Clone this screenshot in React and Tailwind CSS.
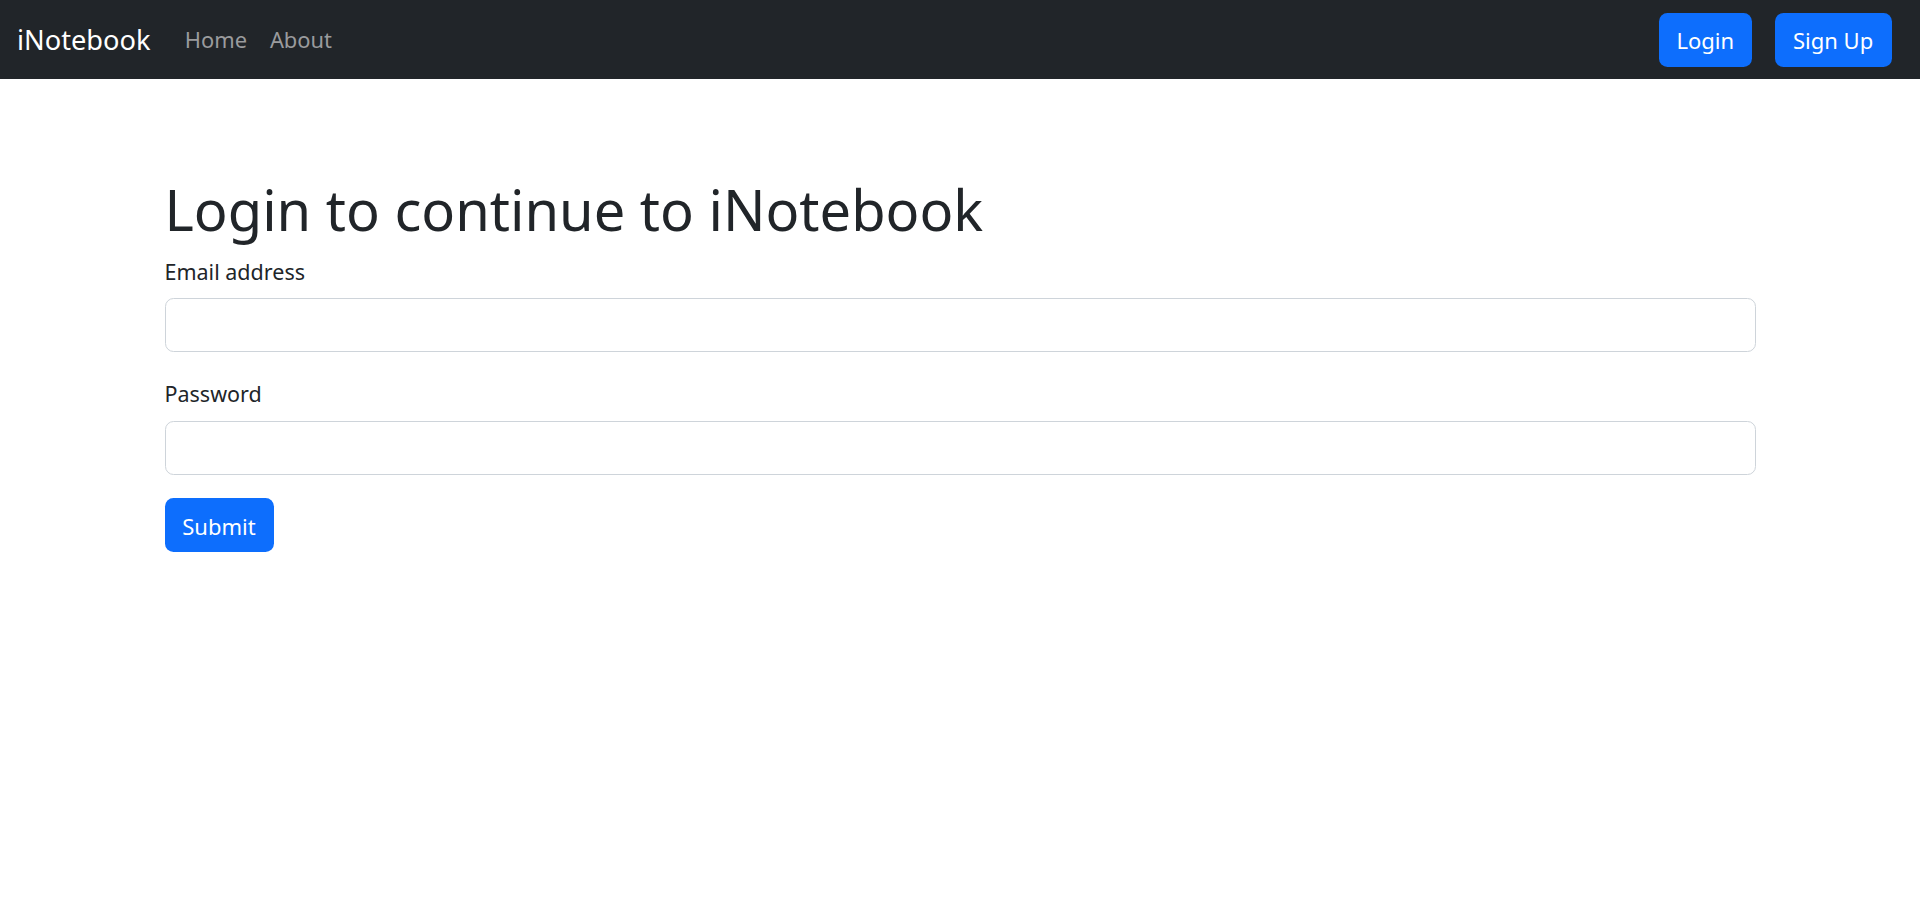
export default function App() {
  return (
    <div className="min-h-screen bg-white text-[#212529]" style={{ fontFamily: '"Noto Sans", "Open Sans", sans-serif' }}>
      <nav className="h-[79px] bg-[#212529] flex items-center px-[17px]">
        <a href="#" className="text-white text-[27.2px] mr-[23px] leading-[1.5] pt-[2px]">iNotebook</a>
        <ul className="flex items-center pt-[2px]">
          <li><a href="#" className="px-[11.4px] text-[21.9px] text-[#9a9b9d]">Home</a></li>
          <li><a href="#" className="px-[11.4px] text-[21.9px] text-[#9a9b9d]">About</a></li>
        </ul>
        <div className="ml-auto flex items-center">
          <button className="h-[54px] w-[93px] mx-[11.4px] pt-[2px] rounded-[8.5px] bg-[#0d6efd] text-white text-[22px]">Login</button>
          <button className="h-[54px] w-[117px] mx-[11.4px] pt-[2px] rounded-[8.5px] bg-[#0d6efd] text-white text-[22px]">Sign Up</button>
        </div>
      </nav>

      <div className="w-[1625px] mx-auto px-[17px] pt-[96px]">
        <h1 className="text-[56px] leading-[68.4px] font-normal mb-[9.4px]">Login to continue to iNotebook</h1>
        <form>
          <div className="mb-[22.8px]">
            <label className="block text-[21.5px] leading-[34.2px] pt-[2px] mb-[9.4px]">Email address</label>
            <input type="email" className="block w-full h-[54px] border border-[#ced4da] rounded-[8.5px] px-[17px] text-[22.8px] outline-none" />
          </div>
          <div className="mb-[22.8px]">
            <label className="block text-[21.5px] leading-[34.2px] pt-[2px] mb-[9.4px]">Password</label>
            <input type="password" className="block w-full h-[54px] border border-[#ced4da] rounded-[8.5px] px-[17px] text-[22.8px] outline-none" />
          </div>
          <button type="submit" className="h-[54px] w-[109px] pt-[3px] rounded-[8.5px] bg-[#0d6efd] text-white text-[22px]">Submit</button>
        </form>
      </div>
    </div>
  );
}
